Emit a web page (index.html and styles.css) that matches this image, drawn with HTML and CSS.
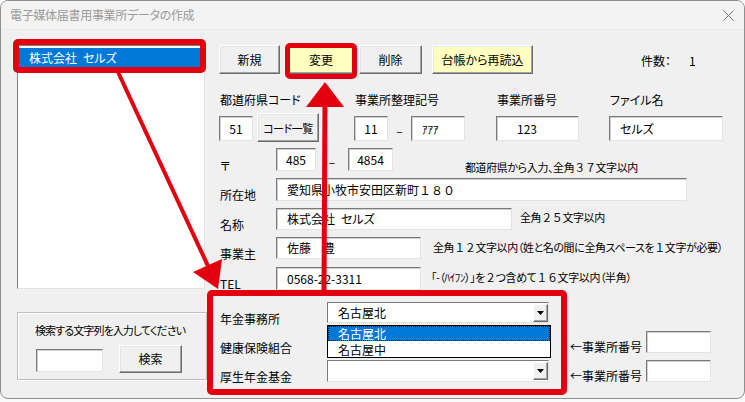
FILE: index.html
```html
<!DOCTYPE html>
<html lang="ja">
<head>
<meta charset="utf-8">
<title>電子媒体届書用事業所データの作成</title>
<link rel="stylesheet" href="styles.css">
</head>
<body>
<div class="window">
  <div class="titlebar">
    <span class="title">電子媒体届書用事業所データの作成</span>
    <svg class="close" width="11" height="11" viewBox="0 0 11 11"><path d="M0.5 0.5L10.5 10.5M10.5 0.5L0.5 10.5" stroke="#6f6f6f" stroke-width="1" fill="none"/></svg>
  </div>
  <div class="content">
    <div class="left">
      <div class="listbox">
        <div class="list-item selected">株式会社&ensp;セルズ</div>
      </div>
      <div class="search-group">
        <div class="search-label">検索する文字列を入力してください</div>
        <div class="search-row">
          <div class="input search-input"></div>
          <button class="btn search-btn">検索</button>
        </div>
      </div>
    </div>
    <div class="right">
      <div class="row btn-row">
        <button class="btn b-new">新規</button>
        <button class="btn yellow b-change">変更</button>
        <button class="btn b-del">削除</button>
        <button class="btn yellow b-reload">台帳から再読込</button>
        <div class="count"><span>件数：</span><span class="count-num">1</span></div>
      </div>
      <div class="codes">
        <div class="lbl">都道府県コード</div>
        <div class="lbl">事業所整理記号</div>
        <div class="lbl">事業所番号</div>
        <div class="lbl">ファイル名</div>
        <div class="cell">
          <div class="input center w34">51</div>
          <button class="btn codelist">コード一覧</button>
        </div>
        <div class="cell">
          <div class="input center w34">11</div>
          <span class="dash d23">–</span>
          <div class="input w54 hankaku">ｱｱｱ</div>
        </div>
        <div class="cell"><div class="input w83 pad20">123</div></div>
        <div class="cell"><div class="input w114">セルズ</div></div>
      </div>
      <div class="row frow r-postal">
        <div class="flabel postal-label">〒</div>
        <div class="input center w40">485</div>
        <span class="dash d32">–</span>
        <div class="input center w45">4854</div>
        <div class="note note-postal">都道府県から入力、全角<span class="fw">３７</span>文字以内</div>
      </div>
      <div class="row frow r-addr">
        <div class="flabel">所在地</div>
        <div class="input w411">愛知県小牧市安田区新町<span class="fw">１８０</span></div>
      </div>
      <div class="row frow r-name">
        <div class="flabel">名称</div>
        <div class="input w236">株式会社&ensp;セルズ</div>
        <div class="note note-name">全角<span class="fw">２５</span>文字以内</div>
      </div>
      <div class="row frow r-owner">
        <div class="flabel">事業主</div>
        <div class="input w145">佐藤　豊</div>
        <div class="note note-owner">全角<span class="fw">１２</span>文字以内（姓と名の間に全角スペースを<span class="fw">１</span>文字が必要）</div>
      </div>
      <div class="row frow r-tel">
        <div class="flabel">TEL</div>
        <div class="input w145">0568-22-3311</div>
        <div class="note note-tel">「-（ﾊｲﾌﾝ）」を<span class="fw">２</span>つ含めて<span class="fw">１６</span>文字以内（半角）</div>
      </div>
      <div class="bottom">
        <div class="row brow r-pension">
          <div class="blabel">年金事務所</div>
          <div class="combo">
            <span class="combo-text">名古屋北</span>
            <span class="combo-btn"><svg width="7" height="4" viewBox="0 0 7 4"><path d="M0 0H7L3.5 4Z" fill="#000"/></svg></span>
            <div class="dropdown">
              <div class="dd-item active">名古屋北</div>
              <div class="dd-item">名古屋中</div>
            </div>
          </div>
        </div>
        <div class="row brow r-health">
          <div class="blabel">健康保険組合</div>
          <div class="combo">
            <span class="combo-text"></span>
            <span class="combo-btn"><svg width="7" height="4" viewBox="0 0 7 4"><path d="M0 0H7L3.5 4Z" fill="#000"/></svg></span>
          </div>
          <div class="side-label">←事業所番号</div>
          <div class="input w65"></div>
        </div>
        <div class="row brow r-fund">
          <div class="blabel">厚生年金基金</div>
          <div class="combo">
            <span class="combo-text"></span>
            <span class="combo-btn"><svg width="7" height="4" viewBox="0 0 7 4"><path d="M0 0H7L3.5 4Z" fill="#000"/></svg></span>
          </div>
          <div class="side-label">←事業所番号</div>
          <div class="input w65"></div>
        </div>
      </div>
    </div>
  </div>

  <div class="redbox rb-list"></div>
  <div class="redbox rb-change"></div>
  <div class="redbox rb-bottom"></div>
  <svg class="arrows" width="743" height="397" viewBox="1 1 743 397">
    <line x1="118" y1="72" x2="208" y2="266" stroke="#e3000f" stroke-width="4"/>
    <polygon points="218,289 193,272 222,259" fill="#e3000f"/>
    <line x1="324" y1="292" x2="325" y2="100" stroke="#e3000f" stroke-width="5"/>
    <polygon points="325,82 306,107 344,107" fill="#e3000f"/>
  </svg>
</div>
</body>
</html>
```

FILE: styles.css
```css
* { box-sizing: border-box; }
html, body { margin: 0; padding: 0; background: #fafafa; }
body {
  font-family: "Noto Sans CJK JP", "Noto Sans", sans-serif;
  font-size: 12px;
  line-height: 16px;
  color: #000;
  font-feature-settings: "palt";
}
button { font: inherit; color: inherit; padding: 0; margin: 0; cursor: default; }
.fw { font-feature-settings: normal; }

.window {
  position: relative;
  width: 745px;
  height: 399px;
  background: #f0f0f0;
  border: 1px solid #8f8f8f;
  border-radius: 8px;
  overflow: hidden;
}
.titlebar {
  height: 29px;
  display: flex;
  align-items: center;
  justify-content: space-between;
  padding: 0 10px 0 9px;
  background: #f3f3f3;
  border-bottom: 1px solid #ebebeb;
}
.title { color: #9a9a9a; font-size: 12px; letter-spacing: -0.3px; }

.content { display: flex; padding: 15px 0 0 16px; }

/* controls */
.input {
  background: #fff;
  border: 1px solid;
  border-color: #7a7a7a #e3e3e3 #e3e3e3 #7a7a7a;
  box-shadow: inset 1px 1px 0 #cfcfcf;
  display: flex;
  align-items: center;
  padding-left: 10px;
  height: 100%;
  white-space: nowrap;
  overflow: hidden;
}
.input.center { justify-content: center; padding-left: 0; }
.input.pad20 { padding-left: 20px; }
.hankaku { font-size: 11px; }

.btn {
  height: 29px;
  display: flex;
  align-items: center;
  justify-content: center;
  background: #f0f0f0;
  border: 1px solid;
  border-color: #fff #6b6b6b #6b6b6b #fff;
  box-shadow: inset -1px -1px 0 #a3a3a3, inset 1px 1px 0 #e6e6e6;
  white-space: nowrap;
}
.btn.yellow { background: #ffffc0; }

/* left column */
.left { width: 190px; display: flex; flex-direction: column; }
.listbox {
  width: 188px;
  height: 244px;
  background: #fff;
  border: 1px solid;
  border-color: #828282 #e3e3e3 #e3e3e3 #828282;
  padding: 2px 4px 0 1px;
}
.list-item { height: 19px; line-height: 19px; padding-left: 10px; font-size: 12px; }
.selected { background: #0078d7; color: #fff; }

.search-group {
  margin-top: 23px;
  width: 190px;
  height: 68px;
  border: 1px solid #bdbdbd;
  box-shadow: inset 1px 1px 0 #fff, 1px 1px 0 #fff;
  padding: 9px 0 0 17px;
}
.search-label { font-size: 11px; letter-spacing: -0.9px; line-height: 16px; white-space: nowrap; }
.search-row { display: flex; align-items: flex-start; margin-top: 7px; }
.search-row .search-input { width: 67px; height: 23px; margin: 4px 0 0 1px; }
.search-row .search-btn { width: 63px; height: 28px; margin-left: 16px; }

.right { margin-left: 12px; width: 510px; display: flex; flex-direction: column; }
.row { display: flex; align-items: flex-start; }

.btn-row { height: 29px; }
.b-new { width: 61px; }
.b-change { width: 66px; margin-left: 8px; }
.b-del { width: 63px; margin-left: 5px; }
.b-reload { width: 101px; margin-left: 10px; }
.count { margin-left: 108px; height: 29px; display: flex; align-items: center; padding-top: 3px; white-space: nowrap; }
.count-num { margin-left: 18px; }

.codes {
  margin-top: 18px;
  display: grid;
  grid-template-columns: 135px 142px 113px 114px;
  grid-template-rows: 16px 25px;
  row-gap: 8px;
}
.lbl { line-height: 16px; padding-left: 1px; white-space: nowrap; }
.cell { display: flex; align-items: flex-start; height: 25px; }
.codelist { width: 62px; margin-left: 4px; margin-top: -3px; font-size: 11px; letter-spacing: -0.5px; }
.dash { text-align: center; line-height: 25px; padding-top: 2px; }
.d23 { width: 23px; }
.d32 { width: 32px; line-height: 23px; }

.w34 { width: 34px; }
.w40 { width: 40px; }
.w45 { width: 45px; }
.w54 { width: 54px; }
.w65 { width: 65px; }
.w83 { width: 83px; }
.w114 { width: 114px; }
.w145 { width: 145px; }
.w236 { width: 236px; }
.w411 { width: 411px; }

.frow { height: 23px; }
.r-postal { margin-top: 7px; }
.r-addr { margin-top: 7px; }
.r-name { margin-top: 7px; height: 22px; }
.r-owner { margin-top: 7px; height: 22px; }
.r-tel { margin-top: 8px; }
.flabel { width: 57px; padding: 9px 0 0 1px; line-height: 16px; white-space: nowrap; }
.postal-label { padding-top: 10px; }

.note { font-size: 11px; line-height: 16px; letter-spacing: -0.4px; white-space: nowrap; }
.note-postal { margin-left: 72px; padding-top: 11px; }
.note-name { margin-left: 8px; padding-top: 1px; }
.note-owner { margin-left: 12px; padding-top: 2px; }
.note-tel { margin-left: 10px; padding-top: 2px; }

/* bottom section */
.bottom { margin-top: 12px; display: flex; flex-direction: column; }
.brow { height: 22px; }
.r-pension { height: 21px; }
.r-health { margin-top: 8px; }
.r-fund { margin-top: 7px; }
.blabel { width: 108px; padding: 9px 0 0 1px; line-height: 16px; white-space: nowrap; }
.combo {
  position: relative;
  width: 222px;
  height: 100%;
  background: #fff;
  border: 1px solid;
  border-color: #7a7a7a #e3e3e3 #e3e3e3 #7a7a7a;
  display: flex;
  align-items: flex-start;
  padding-left: 10px;
}
.combo-text { flex: 1; line-height: 19px; white-space: nowrap; }
.combo-btn {
  width: 15px;
  height: 18px;
  margin-top: 1px;
  background: #f0f0f0;
  border: 1px solid;
  border-color: #fff #6b6b6b #6b6b6b #fff;
  box-shadow: inset -1px -1px 0 #a3a3a3;
  display: flex;
  align-items: center;
  justify-content: center;
}
.combo-btn svg { display: block; }
.dropdown {
  position: absolute;
  top: 22px;
  left: -1px;
  width: 224px;
  height: 33px;
  background: #fff;
  border: 1px solid #000;
  z-index: 2;
}
.dd-item { height: 15px; line-height: 15px; padding-left: 10px; white-space: nowrap; }
.dd-item + .dd-item { margin-top: 1px; }
.dd-item.active { background: #0078d7; color: #fff; outline: 1px dotted #1c1c1c; outline-offset: -1px; }

.side-label { margin-left: 21px; width: 76px; padding-top: 8px; line-height: 16px; white-space: nowrap; }
.brow .input { height: 22px; }

/* annotation overlays */
.redbox {
  position: absolute;
  border: 6px solid #e3000f;
  border-radius: 5px;
  z-index: 5;
}
.rb-list { left: 12px; top: 38px; width: 193px; height: 34px; }
.rb-change { left: 284px; top: 42px; width: 72px; height: 36px; border-width: 5px; }
.rb-bottom { left: 206px; top: 289px; width: 360px; height: 105px; }
.arrows { position: absolute; left: 0; top: 0; z-index: 6; pointer-events: none; }
```
